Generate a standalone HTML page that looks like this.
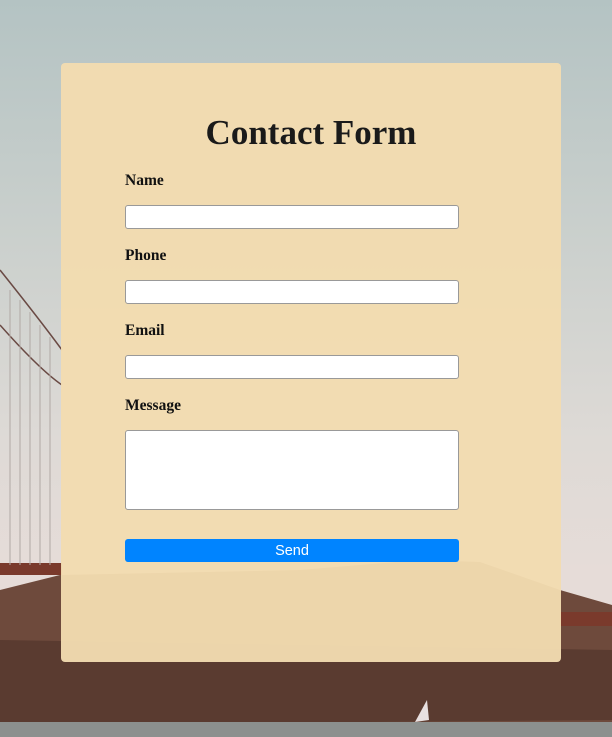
<!DOCTYPE html>
<html><head><style>
html,body{margin:0;padding:0;width:612px;height:737px;overflow:hidden;}
body{position:relative;background:linear-gradient(180deg,#b4c3c3 0%,#c9cfcc 30%,#dedad6 60%,#e6dcd8 78%);font-family:"Liberation Serif",serif;}
svg.bg{position:absolute;left:0;top:0;}
.card{position:absolute;left:61px;top:63px;width:500px;height:599px;background:rgba(242,220,176,0.96);border-radius:4px;}
h1{position:absolute;left:61px;width:500px;top:113px;margin:0;text-align:center;font-size:35px;font-weight:bold;color:#1a1a1a;line-height:40px;}
.lab{position:absolute;left:125px;font-size:15.5px;font-weight:bold;color:#111;}
.in{position:absolute;left:125px;width:332px;height:22px;background:#fff;border:1px solid #999;border-radius:3px;}
.btn{position:absolute;left:125px;top:539px;width:334px;height:23px;background:#0084ff;border-radius:3px;color:#fff;font-family:"Liberation Sans",sans-serif;font-size:14.5px;text-align:center;line-height:25px;}
</style></head><body>
<svg class="bg" width="612" height="737">
<path d="M0 590 L60 575 L300 570 L420 560 L480 562 L560 590 L612 605 L612 737 L0 737Z" fill="#6e4a3c"/>
<path d="M0 640 L612 650 L612 720 L0 725Z" fill="#5a3b30"/>
<rect x="0" y="722" width="612" height="15" fill="#8c908e"/>
<rect x="0" y="563" width="62" height="12" fill="#7a3a2c"/>
<rect x="560" y="612" width="52" height="14" fill="#7a3a2c"/>
<path d="M0 270 Q40 320 62 350" stroke="#6a4a44" stroke-width="1.5" fill="none"/>
<path d="M0 325 Q40 370 62 385" stroke="#6a4a44" stroke-width="1.5" fill="none"/>
<g stroke="#b0a8a4" stroke-width="1"><line x1="10" y1="290" x2="10" y2="565"/><line x1="20" y1="300" x2="20" y2="565"/><line x1="30" y1="312" x2="30" y2="565"/><line x1="40" y1="325" x2="40" y2="565"/><line x1="50" y1="337" x2="50" y2="565"/></g>
<path d="M415 722 L427 700 L429 720Z" fill="#e8e0e0"/>
</svg>
<div class="card"></div>
<h1>Contact Form</h1>
<div class="lab" style="top:172px">Name</div>
<div class="in" style="top:205px"></div>
<div class="lab" style="top:247px">Phone</div>
<div class="in" style="top:280px"></div>
<div class="lab" style="top:322px">Email</div>
<div class="in" style="top:355px"></div>
<div class="lab" style="top:397px">Message</div>
<div class="in" style="top:430px;height:78px"></div>
<div class="btn">Send</div>
</body></html>
